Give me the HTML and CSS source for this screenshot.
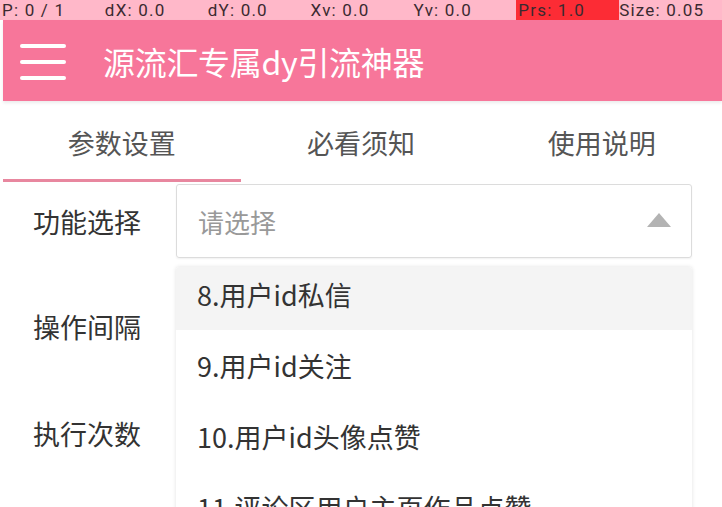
FILE: index.html
```html
<!DOCTYPE html>
<html lang="zh">
<head>
    <meta charset="UTF-8">
    <title>源流汇专属dy引流神器</title>
    <link rel="stylesheet" href="styles.css">
</head>
<body>
    <div class="pointer-bar">
        <span>P: 0 / 1</span>
        <span>dX: 0.0</span>
        <span>dY: 0.0</span>
        <span>Xv: 0.0</span>
        <span>Yv: 0.0</span>
        <span class="prs">Prs: 1.0</span>
        <span>Size: 0.05</span>
    </div>

    <div class="appbar">
        <div class="menu-btn">
            <svg width="46" height="38" viewBox="0 0 46 38">
                <g stroke="#fff" stroke-width="4" stroke-linecap="round">
                    <line x1="2" y1="3" x2="44" y2="3"/>
                    <line x1="2" y1="19" x2="44" y2="19"/>
                    <line x1="2" y1="35" x2="44" y2="35"/>
                </g>
            </svg>
        </div>
        <h1>源流汇专属dy引流神器</h1>
    </div>

    <div class="tabs">
        <div class="tab active">参数设置</div>
        <div class="tab">必看须知</div>
        <div class="tab">使用说明</div>
    </div>

    <div class="form">
        <div class="row first">
            <label>功能选择</label>
            <div class="select">
                <div class="select-box">
                    <span class="placeholder">请选择</span>
                    <span class="arrow"></span>
                </div>
                <div class="dropdown">
                    <ul>
                        <li class="hover">8.用户id私信</li>
                        <li>9.用户id关注</li>
                        <li>10.用户id头像点赞</li>
                        <li>11.评论区用户主页作品点赞</li>
                    </ul>
                </div>
            </div>
        </div>
        <div class="row">
            <label>操作间隔</label>
        </div>
        <div class="row">
            <label>执行次数</label>
        </div>
    </div>
</body>
</html>
```

FILE: styles.css
```css
* {
    box-sizing: border-box;
}
html, body {
    margin: 0;
    padding: 0;
}
body {
    width: 722px;
    height: 507px;
    overflow: hidden;
    background: #fff;
    font-family: "Noto Sans CJK SC", "Noto Sans", sans-serif;
    color: #333;
}

/* touch debug strip */
.pointer-bar {
    display: grid;
    grid-template-columns: repeat(7, 1fr);
    height: 20px;
    background: #ffb8c9;
    font-family: Roboto, sans-serif;
    font-size: 17px;
    line-height: 20px;
    letter-spacing: 1.2px;
    color: #3a2a30;
    padding-left: 2px;
}
.pointer-bar span {
    white-space: nowrap;
}
.pointer-bar .prs {
    background: #fc2c35;
    padding-left: 2px;
}

.appbar {
    height: 81px;
    margin-left: 3px;
    background: #f7769a;
    display: flex;
    align-items: center;
    box-shadow: 0 2px 3px rgba(0, 0, 0, 0.08);
}
.menu-btn {
    width: 46px;
    height: 38px;
    margin-left: 17px;
    margin-top: 2px;
}
.menu-btn svg {
    display: block;
}
.appbar h1 {
    margin: 0 0 0 37px;
    font-size: 32px;
    font-weight: 400;
    color: #fff;
    letter-spacing: -0.3px;
}

.tabs {
    display: grid;
    grid-template-columns: repeat(3, 1fr);
    height: 81px;
}
.tab {
    display: flex;
    align-items: center;
    justify-content: center;
    padding-top: 4px;
    font-size: 27px;
    color: #555;
    border-bottom: 3px solid transparent;
}
.tab.active {
    border-bottom-color: #e8879f;
    margin-left: 3px;
}

.form {
    padding: 2px 30px 0 33px;
}
.row {
    display: flex;
    align-items: center;
    height: 107px;
}
.row.first {
    height: 74px;
    margin-bottom: 15px;
}
.row label {
    width: 143px;
    flex: none;
    font-size: 27px;
    color: #333;
}
.select {
    position: relative;
    flex: 1;
    height: 74px;
}
.select-box {
    height: 74px;
    border: 1px solid #dcdcdc;
    border-radius: 3px;
    box-shadow: 0 1px 2px rgba(0, 0, 0, 0.06);
    display: flex;
    align-items: center;
    justify-content: space-between;
    padding: 0 20px 0 21px;
}
.placeholder {
    font-size: 26px;
    color: #999;
}
.arrow {
    width: 0;
    height: 0;
    border-left: 12px solid transparent;
    border-right: 12px solid transparent;
    border-bottom: 14px solid #b3b3b3;
    margin-top: -2px;
}

.dropdown {
    position: absolute;
    top: 83px;
    left: 0;
    right: 0;
    height: 260px;
    overflow: hidden;
    background: #fff;
    border-radius: 3px;
    box-shadow: 0 0 4px rgba(0, 0, 0, 0.12);
}
.dropdown ul {
    list-style: none;
    margin: -8px 0 0;
    padding: 0;
}
.dropdown li {
    height: 71px;
    display: flex;
    align-items: center;
    padding-left: 21px;
    font-size: 27px;
    color: #333;
}
.dropdown li.hover {
    background: #f4f4f4;
}
```
